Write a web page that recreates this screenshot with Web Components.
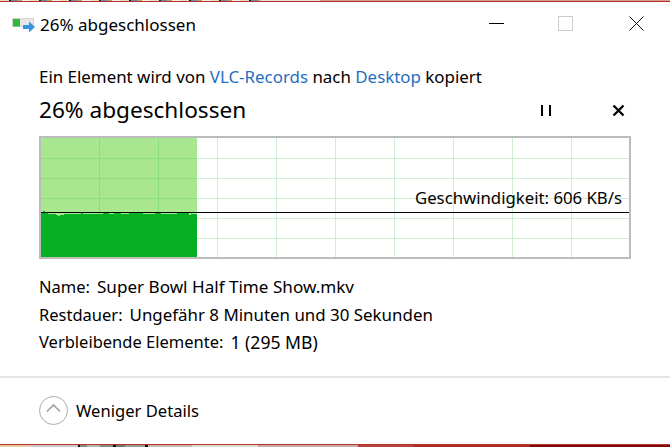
<!DOCTYPE html>
<html lang="de"><head><meta charset="utf-8">
<style>
html,body{margin:0;padding:0;width:670px;height:447px;overflow:hidden;background:#fff}
body{font-family:"Noto Sans","Open Sans",sans-serif;color:#000}
</style></head><body>
<copy-dialog></copy-dialog>
<script>
function def(name, html){
  customElements.define(name, class extends HTMLElement{
    constructor(){super();this.attachShadow({mode:'open'}).innerHTML=html;}
  });
}
def('title-bar',`<style>
:host{display:flex;align-items:center;height:43px;padding:0 0 0 12px;box-sizing:border-box}
.ic{display:block;margin-top:7px}
.t{font-size:17px;margin-left:4px;flex:1;position:relative;top:1px;white-space:nowrap}
.ctl{display:flex;margin-right:26px;align-items:center}
.ctl svg{display:block}
.ctl svg+svg{margin-left:54px}
.ctl svg+svg+svg{margin-left:56px}
</style>
<svg class="ic" width="24" height="18" viewBox="0 0 24 18"><rect x="0.500" y="0.500" width="21" height="8" fill="#e6e6e6" stroke="#d4d4d4"/><rect x="1" y="1" width="7" height="7.500" fill="#2fb83c"/><path d="M11 7h6V3.500l6 5.500-6 5.500V11h-6z" fill="#3a94e2"/></svg>
<span class="t"><slot></slot></span>
<span class="ctl">
<svg width="15" height="15"><rect y="7" width="15" height="1" fill="#000"/></svg>
<svg width="15" height="15"><rect x=".5" y=".5" width="14" height="14" fill="none" stroke="#ccc"/></svg>
<svg width="15" height="15"><path d="M.5.500l14 14M14.500.500l-14 14" stroke="#111" fill="none"/></svg>
</span>`);
def('speed-graph',`<style>
:host{display:block;position:relative;width:592px;height:123px;box-sizing:border-box;border:2px solid #bcbcbc;background:#fff;margin-left:39px}
svg{position:absolute;left:0;top:0}
.lbl{position:absolute;right:7px;top:48px;font-size:16.750px;line-height:24px;white-space:nowrap}
</style>
<svg width="588" height="119" viewBox="0 0 588 119" shape-rendering="crispEdges">
<g stroke="#cdeed3" fill="none"><path d="M58.500 0V119M117.500 0V119M176.500 0V119M235.500 0V119M294.500 0V119M353.500 0V119M412.500 0V119M471.500 0V119M530.500 0V119"/>
<path d="M0 20.500H588M0 40.500H588M0 60.500H588M0 80.500H588M0 100.500H588"/></g>
<rect width="156" height="119" fill="#a9e690"/>
<g stroke="#8ede7c" fill="none"><path d="M58.500 0V119M117.500 0V119M0 20.500H156M0 40.500H156M0 60.500H156"/></g>
<path d="M0 75H2V73H4V75H7V76H15V77H17V78H19V77H23V76H40V75H42V76H62V75H68V76H73V75H80V76H88V75H102V76H114V75H120V76H136V75H148V77H150V76H156V119H0Z" fill="#05b024"/>
<rect x="0" y="74" width="588" height="1" fill="#000"/>
</svg>
<span class="lbl"><slot></slot></span>`);
def('info-row',`<style>
:host{display:flex;height:27.500px;align-items:center;white-space:nowrap;gap:7px;font-size:16.900px}
::slotted([slot=k]){font-size:16.500px}
</style><slot name="k"></slot><slot></slot>`);
def('details-toggle',`<style>
:host{display:flex;align-items:center;gap:8px;padding-left:39px;height:67px;box-sizing:border-box;border-top:2px solid #e4e4e4;font-size:16.600px}
svg{display:block}
</style>
<svg width="29" height="29" viewBox="0 0 29 29"><circle cx="14.500" cy="14.500" r="14" fill="none" stroke="#ababab"/><path d="M8 15.500l6.500-6.500 6.500 6.500" fill="none" stroke="#a0a0a0" stroke-width="1.600"/></svg>
<slot></slot>`);
def('copy-dialog',`<style>
:host{display:flex;flex-direction:column;width:670px;height:447px;box-sizing:border-box;position:relative;background:#fff;padding-top:2px;overflow:hidden;color:#000}
.top{position:absolute;left:0;right:0;top:0;height:2px;background:linear-gradient(#0000 50%,#b8352c 50%),repeating-linear-gradient(90deg,#e9d9c0 0 9px,#222 9px 11px,#6a8cb0 11px 17px,#c89a60 17px 22px,#eee 22px 30px);}
.top::after{content:"";position:absolute;left:260px;right:0;top:0;height:1px;background:linear-gradient(90deg,#e4dcdc 0 60px,#d59a8e 60px 500px,#cf7a52)}
.head{font-size:16.900px;margin:20px 0 0 39px;line-height:24px;height:24px;white-space:nowrap}
a{color:#1f6fbf;text-decoration:none}
.prog{display:flex;align-items:center;margin:6px 0 0 39px;height:30px}
.prog .big{font-size:22.600px;flex:1;white-space:nowrap;margin-top:-2px}
.prog svg{display:block}
.pc{display:flex;gap:61px;margin-right:45px;align-items:center}
.rows{margin:14px 0 0 39px;height:103px}
.strip{position:absolute;left:0;right:0;bottom:0;height:3px;box-sizing:border-box;border-top:1px solid #b8352c;background:linear-gradient(90deg,#e8c9a0 0 30px,#cfc6cc 30px 78px,#111 78px 80px,#8a8a8a 80px 87px,#b8b8b8 87px 100px,#8a8a8a 100px 113px,#111 113px 116px,#777 116px 125px,#9a9a9a 125px 145px,#111 145px 148px,#c8b4b4 148px 192px,#dcdcd4 192px 258px,#c4aaa8 258px 358px,#b0443c 358px 414px,#a82a22 414px 530px,#7d0808 530px)}
</style>
<div class="top"></div>
<title-bar>26% abgeschlossen</title-bar>
<div class="head">Ein Element wird von <a>VLC-Records</a> nach <a>Desktop</a> kopiert</div>
<div class="prog"><span class="big">26% abgeschlossen</span>
<span class="pc"><svg width="10" height="11"><path d="M0 0h2v11H0zM8 0h2v11H8z" fill="#000"/></svg><svg width="13" height="13"><path d="M1.500 1.500l10 10M11.500 1.500l-10 10" stroke="#000" stroke-width="2.300" fill="none"/></svg></span></div>
<speed-graph style="margin-top:11px">Geschwindigkeit: 606 KB/s</speed-graph>
<div class="rows">
<info-row><span slot="k">Name:</span><span style="font-size:17.100px">Super Bowl Half Time Show.mkv</span></info-row>
<info-row><span slot="k">Restdauer:</span><span>Ungefähr 8 Minuten und 30 Sekunden</span></info-row>
<info-row><span slot="k">Verbleibende Elemente:</span><span style="font-size:17.600px">1 (295 MB)</span></info-row>
</div>
<details-toggle>Weniger Details</details-toggle>
<div class="strip"></div>`);
</script>
</body></html>
